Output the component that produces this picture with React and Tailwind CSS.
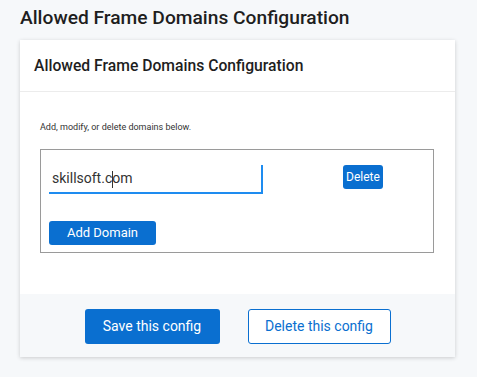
import React from 'react';

const App = () => {
  return (
    <div className="min-h-[377px] bg-[#f6f8fa] px-5 pt-[5px] pb-4 font-['Roboto',_'Liberation_Sans',_sans-serif] text-[#1f2a37]">
      <h1 className="text-[19.2px] leading-[25px] font-medium text-[#1e1e1e]">Allowed Frame Domains Configuration</h1>

      <div className="mt-[10px] w-[435px] bg-white shadow-[0_1px_4px_rgba(0,0,0,0.18)]">
        {/* Header */}
        <div className="h-[52px] flex items-center px-[14px] border-b border-[#ececec]">
          <h2 className="text-[15.7px] font-medium text-[#1e1e1e]">Allowed Frame Domains Configuration</h2>
        </div>

        {/* Body */}
        <div className="px-5 pt-[30px] pb-[41px]">
          <p className="text-[9px] leading-[11px] text-[#333]">Add, modify, or delete domains below.</p>

          <div className="mt-[16px] mr-[1px] border border-[#9a9a9a] pl-[8px] pt-[15px] pb-[7px]">
            <div className="flex items-start">
              <div className="relative w-[214px] h-[29px] border-b-2 border-r-2 border-[#1e8cf0] flex items-center pl-[3px]">
                <span className="text-[14px] text-[#333]">skillsoft.com</span>
                <span className="absolute left-[63px] top-[6px] w-px h-[17px] bg-[#333]" />
              </div>
              <button className="ml-[80px] h-[24px] px-[3px] rounded-[3px] bg-[#0a6fd0] text-white text-[12px]">Delete</button>
            </div>
            <button className="block mt-[27px] w-[107px] h-[24px] rounded-[3px] bg-[#0a6fd0] text-white text-[13px]">Add Domain</button>
          </div>
        </div>

        {/* Footer */}
        <div className="h-[63px] bg-[#f6f8fa] flex justify-center items-start pt-[15px] gap-[28px]">
          <button className="w-[135px] h-[35px] rounded-[3px] bg-[#0a6fd0] text-white text-[14px]">Save this config</button>
          <button className="w-[143px] h-[35px] rounded-[3px] border border-[#0a6fd0] bg-white text-[#0a6fd0] text-[14px]">Delete this config</button>
        </div>
      </div>
    </div>
  );
};

export default App;
